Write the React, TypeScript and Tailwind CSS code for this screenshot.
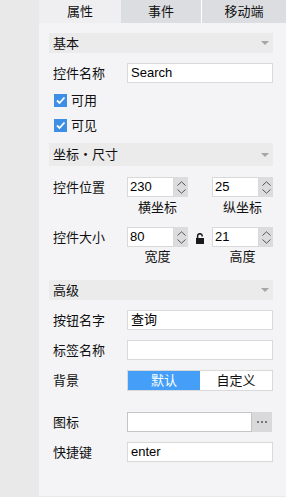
import React from 'react';

const font = "font-['Liberation_Sans','Noto_Sans_CJK_SC',sans-serif]";

const SectionHeader: React.FC<{ title: string; className?: string }> = ({ title, className }) => (
  <div className={`flex items-center justify-between bg-[#ebebeb] pl-[4px] pr-[4px] ${className || ''}`}>
    <span className="text-[13px] text-[#111] leading-none">{title}</span>
    <span className="w-0 h-0 border-l-[4px] border-r-[4px] border-t-[4px] border-l-transparent border-r-transparent border-t-[#a6a6a6]" />
  </div>
);

const Label: React.FC<{ text: string }> = ({ text }) => (
  <div className="w-[78px] pl-[4px] shrink-0 text-[13px] text-[#111] leading-none">{text}</div>
);

const TextRow: React.FC<{ label: string; value?: string; className?: string }> = ({ label, value, className }) => (
  <div className={`flex items-center h-[20px] ${className || ''}`}>
    <Label text={label} />
    <div className="flex-1 h-[20px] bg-white border border-[#d9d9d9] flex items-center pl-[3px] text-[13px] text-black">
      {value}
    </div>
  </div>
);

const Check: React.FC<{ label: string; className?: string }> = ({ label, className }) => (
  <div className={`flex items-center h-[20px] pl-[5px] ${className || ''}`}>
    <div className="w-[13px] h-[13px] bg-[#3d8fe6] flex items-center justify-center">
      <svg width="11" height="11" viewBox="0 0 11 11">
        <path d="M2 5.5 L4.5 8 L9.5 2.5" stroke="white" strokeWidth="1.8" fill="none" />
      </svg>
    </div>
    <span className="ml-[4px] text-[13px] text-[#111] leading-none">{label}</span>
  </div>
);

const Spin: React.FC<{ value: string }> = ({ value }) => (
  <div className="flex h-[20px] w-[61px]">
    <div className="flex-1 bg-white border border-[#d9d9d9] flex items-center pl-[2px] text-[13px] text-black">{value}</div>
    <div className="w-[14px] bg-[#dcdcde] flex flex-col items-center justify-center gap-[3px]">
      <svg width="9" height="5" viewBox="0 0 9 5">
        <path d="M0.5 4.5 L4.5 0.8 L8.5 4.5" stroke="#555" strokeWidth="1" fill="none" />
      </svg>
      <svg width="9" height="5" viewBox="0 0 9 5">
        <path d="M0.5 0.5 L4.5 4.2 L8.5 0.5" stroke="#555" strokeWidth="1" fill="none" />
      </svg>
    </div>
  </div>
);

const Lock = () => (
  <svg width="8" height="11" viewBox="0 0 8 11">
    <path d="M1.6 5 V3 A2.3 2.3 0 0 1 6.2 3 V3.4" stroke="#1a1a1a" strokeWidth="1.5" fill="none" />
    <rect x="0" y="5" width="8" height="6" fill="#1a1a1a" />
  </svg>
);

export default function App() {
  return (
    <div className={`flex w-[286px] h-[497px] bg-[#e9e9e9] ${font}`}>
      <div className="w-[39px] shrink-0" />
      <div className="flex-1 flex flex-col bg-[#f4f4f6] h-[496px]">
        <div className="flex h-[23px] text-[13px] text-[#111]">
          <div className="w-[82px] flex items-center justify-center bg-[#efeff1]">属性</div>
          <div className="w-[81px] flex items-center justify-center bg-[#dcdde0] border-r border-white">事件</div>
          <div className="flex-1 flex items-center justify-center bg-[#dcdde0]">移动端</div>
        </div>

        <div className="flex flex-col pl-[10px] pr-[13px]">
          <SectionHeader title="基本" className="mt-[10px] h-[20px]" />
          <TextRow label="控件名称" value="Search" className="mt-[10px]" />
          <Check label="可用" className="mt-[7px]" />
          <Check label="可见" className="mt-[5px]" />

          <SectionHeader title="坐标・尺寸" className="mt-[8px] h-[23px]" />
          <div className="flex items-center h-[20px] mt-[11px]">
            <Label text="控件位置" />
            <Spin value="230" />
            <div className="w-[24px]" />
            <Spin value="25" />
          </div>
          <div className="flex items-center h-[22px] text-[13px] text-[#111]">
            <div className="w-[78px]" />
            <div className="w-[61px] text-center">横坐标</div>
            <div className="w-[24px]" />
            <div className="w-[61px] text-center">纵坐标</div>
          </div>
          <div className="flex items-center h-[20px] mt-[8px]">
            <Label text="控件大小" />
            <Spin value="80" />
            <div className="w-[24px] flex items-center justify-center pt-[2px]">
              <Lock />
            </div>
            <Spin value="21" />
          </div>
          <div className="flex items-center h-[20px] text-[13px] text-[#111]">
            <div className="w-[78px]" />
            <div className="w-[61px] text-center">宽度</div>
            <div className="w-[24px]" />
            <div className="w-[61px] text-center">高度</div>
          </div>

          <SectionHeader title="高级" className="mt-[13px] h-[20px]" />
          <TextRow label="按钮名字" value="查询" className="mt-[10px]" />
          <TextRow label="标签名称" className="mt-[10px]" />
          <div className="flex items-center h-[21px] mt-[10px]">
            <Label text="背景" />
            <div className="flex-1 flex h-[21px] border border-[#d9d9d9] text-[13px]">
              <div className="flex-1 bg-[#459ff8] text-white flex items-center justify-center">默认</div>
              <div className="flex-1 bg-white text-[#111] flex items-center justify-center">自定义</div>
            </div>
          </div>
          <div className="flex items-center h-[20px] mt-[21px]">
            <Label text="图标" />
            <div className="flex-1 flex h-[20px] pr-[1px]">
              <div className="flex-1 bg-white border border-[#c4c4c4]" />
              <div className="w-[20px] bg-[#d9d9dc] flex items-center justify-center gap-[2px]">
                <span className="w-[2px] h-[2px] bg-[#777]" />
                <span className="w-[2px] h-[2px] bg-[#777]" />
                <span className="w-[2px] h-[2px] bg-[#777]" />
              </div>
            </div>
          </div>
          <TextRow label="快捷键" value="enter" className="mt-[10px]" />
        </div>
      </div>
    </div>
  );
}
